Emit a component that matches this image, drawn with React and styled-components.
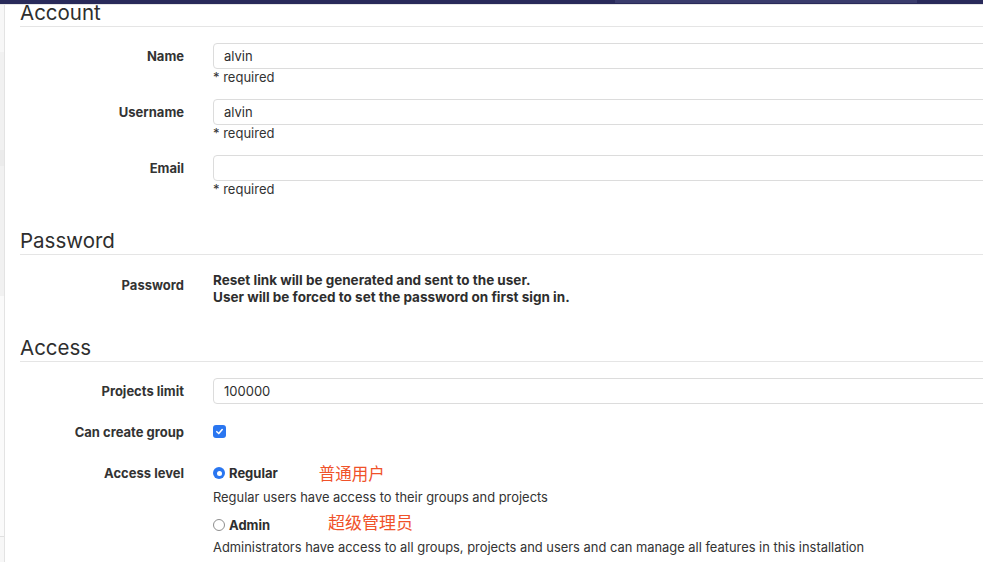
import React from 'react'
import styled, { createGlobalStyle } from 'styled-components'

const GlobalStyle = createGlobalStyle`
  html, body {
    margin: 0;
    padding: 0;
    background: #fff;
    overflow: hidden;
  }
  body {
    font-family: Inter, "Liberation Sans", "Noto Sans CJK SC", sans-serif;
    color: #303030;
  }
`

const TopBar = styled.header`
  height: 4px;
  background: #292a5a;
  display: flex;
  border-bottom: 1px solid #e6e6e6;
`

const SearchStrip = styled.div`
  margin-left: 615px;
  width: 302px;
  height: 3px;
  background: #3a3c6c;
`

const Layout = styled.div`
  display: flex;
  height: 557px;
`

const Sidebar = styled.aside`
  width: 4px;
  flex: none;
  background: #f7f7f7;
  border-right: 1px solid #e3e3e3;
  display: flex;
  flex-direction: column;
`

const SideBlock = styled.div`
  height: ${p => p.h}px;
  background: ${p => p.bg};
`

const Main = styled.main`
  flex: 1;
  padding-left: 15px;
  overflow: hidden;
  display: flex;
  flex-direction: column;
`

const Section = styled.section`
  margin-top: ${p => p.top}px;
`

const Heading = styled.h3`
  margin: 0;
  font-size: 20.5px;
  line-height: 20px;
  font-weight: 400;
  color: #2e2e2e;
  padding-bottom: 3px;
  border-bottom: 1px solid #e5e5e5;
`

const Fields = styled.div`
  padding-top: ${p => p.top}px;
  display: flex;
  flex-direction: column;
  gap: ${p => p.gap || 14}px;
`

const Row = styled.div`
  display: grid;
  grid-template-columns: 164px 1fr;
  column-gap: 29px;
  align-items: start;
`

const Label = styled.label`
  text-align: right;
  font-size: 13px;
  line-height: 16px;
  font-weight: 700;
  color: #333;
  padding-top: 5px;
`

const Input = styled.div`
  height: 26px;
  box-sizing: border-box;
  width: 1000px;
  border: 1px solid #dcdcdc;
  border-radius: 4px;
  padding: 0 10px;
  font-size: 13px;
  line-height: 24px;
  color: #2e2e2e;
`

const Help = styled.div`
  font-size: 13px;
  line-height: 15px;
  padding-top: 1px;
  color: #333;
`

const Note = styled.div`
  font-size: 13.5px;
  line-height: 17px;
  font-weight: 700;
  color: #2e2e2e;
`

const CheckCell = styled.div`
  height: 26px;
  display: flex;
  align-items: center;
`

const CheckBox = styled.span`
  width: 13px;
  height: 13px;
  border-radius: 3px;
  background: #2a76f0;
  display: flex;
  align-items: center;
  justify-content: center;
  margin-top: -2px;
`

const Option = styled.div`
  height: 22px;
  display: flex;
  align-items: center;
  margin-top: ${p => p.top || 0}px;
`

const Radio = styled.span`
  width: 12px;
  height: 12px;
  box-sizing: border-box;
  border-radius: 50%;
  flex: none;
  background: ${p => (p.checked ? '#2a76f0' : '#fff')};
  border: ${p => (p.checked ? 'none' : '1px solid #8e8e8e')};
  display: flex;
  align-items: center;
  justify-content: center;
  &::after {
    content: '';
    display: ${p => (p.checked ? 'block' : 'none')};
    width: 5px;
    height: 5px;
    border-radius: 50%;
    background: #fff;
  }
`

const OptionName = styled.span`
  margin-left: 4px;
  font-size: 13px;
  font-weight: 700;
  color: #2e2e2e;
`

const Annotation = styled.span`
  margin-left: ${p => p.gap}px;
  margin-bottom: ${p => p.lift}px;
  font-family: "Noto Sans CJK SC", sans-serif;
  font-size: ${p => p.size}px;
  color: #f0522a;
`

const OptionText = styled.div`
  font-size: 12.9px;
  line-height: 16px;
  color: #333;
  margin-top: ${p => p.top}px;
`

const accountFields = [
  { label: 'Name', value: 'alvin' },
  { label: 'Username', value: 'alvin' },
  { label: 'Email', value: '' }
]

const sideBlocks = [
  { h: 47, bg: '#f7f7f7' },
  { h: 98, bg: '#f1f1f1' },
  { h: 16, bg: '#ebebeb' },
  { h: 130, bg: '#f1f1f1' },
  { h: 240, bg: '#fafafa' },
  { h: 1, bg: '#e0e0e0' }
]

const CheckMark = () => (
  <svg width="9" height="9" viewBox="0 0 10 10">
    <path d="M2 5.2 L4.2 7.3 L8 2.8" fill="none" stroke="#fff" strokeWidth="1.7" strokeLinecap="round" strokeLinejoin="round" />
  </svg>
)

const App = () => (
  <>
    <GlobalStyle />
    <TopBar>
      <SearchStrip />
    </TopBar>
    <Layout>
      <Sidebar>
        {sideBlocks.map((b, i) => (
          <SideBlock key={i} h={b.h} bg={b.bg} />
        ))}
      </Sidebar>
      <Main>
        <Section top={-2}>
          <Heading>Account</Heading>
          <Fields top={16}>
            {accountFields.map(f => (
              <Row key={f.label}>
                <Label>{f.label}</Label>
                <div>
                  <Input>{f.value}</Input>
                  <Help>* required</Help>
                </div>
              </Row>
            ))}
          </Fields>
        </Section>

        <Section top={34}>
          <Heading>Password</Heading>
          <Fields top={17}>
            <Row>
              <Label>Password</Label>
              <Note>
                Reset link will be generated and sent to the user.
                <br />
                User will be forced to set the password on first sign in.
              </Note>
            </Row>
          </Fields>
        </Section>

        <Section top={32}>
          <Heading>Access</Heading>
          <Fields top={16} gap={15}>
            <Row>
              <Label>Projects limit</Label>
              <Input>100000</Input>
            </Row>
            <Row>
              <Label>Can create group</Label>
              <CheckCell>
                <CheckBox>
                  <CheckMark />
                </CheckBox>
              </CheckCell>
            </Row>
            <Row>
              <Label>Access level</Label>
              <div>
                <Option top={2}>
                  <Radio checked />
                  <OptionName>Regular</OptionName>
                  <Annotation gap={41} lift={0} size={16.5}>普通用户</Annotation>
                </Option>
                <OptionText top={6}>Regular users have access to their groups and projects</OptionText>
                <Option top={8}>
                  <Radio />
                  <OptionName>Admin</OptionName>
                  <Annotation gap={58} lift={8} size={17}>超级管理员</Annotation>
                </Option>
                <OptionText top={4}>
                  Administrators have access to all groups, projects and users and can manage all features in this installation
                </OptionText>
              </div>
            </Row>
          </Fields>
        </Section>
      </Main>
    </Layout>
  </>
)

export default App
